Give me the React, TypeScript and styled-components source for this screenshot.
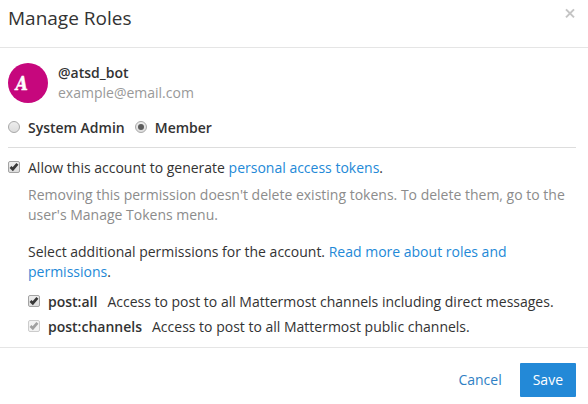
import React from "react";
import styled, { createGlobalStyle } from "styled-components";

const GlobalStyle = createGlobalStyle`
  * { box-sizing: border-box; }
  body { margin: 0; background: #fff; }
`;
const Dialog = styled.section`
  width: 588px; height: 404px; overflow: hidden; background: #fff;
  display: flex; flex-direction: column;
  font: 14px/20px "Open Sans", sans-serif; color: #333;
`;
const Header = styled.header`
  height: 48px; flex: none; padding: 6px 12px 0 8px; border-bottom: 1px solid #e5e5e5;
  display: flex; justify-content: space-between;
`;
const Title = styled.h1`
  margin: 0; font-size: 19px; line-height: 24px; font-weight: 400;
`;
const CloseButton = styled.button`
  border: 0; padding: 0; background: none; height: 16px; display: flex; color: #c4c4c4;
`;
const Body = styled.div`
  height: 299px; flex: none; padding: 15px 12px 0 8px;
`;
const Account = styled.div`
  display: flex; gap: 10px; height: 40px;
`;
const Avatar = styled.svg` width: 40px; height: 40px; flex: none; `;
const Name = styled.div` font-weight: 600; `;
const Email = styled.div` color: #999; `;
const Roles = styled.div`
  display: flex; height: 45px; padding-top: 15px; gap: 10px; border-bottom: 1px solid #ddd;
`;
const Choice = styled.label`
  display: flex; align-items: flex-start; gap: 8px; white-space: nowrap;
`;
const Mark = styled.svg` width: 12px; height: 12px; flex: none; margin-top: 3px; `;
const Strong = styled.span` font-weight: 600; `;
const Description = styled.span` margin-left: 2px; `;
const Allow = styled.div` padding-top: 10px; `;
const Content = styled.div` padding-left: 20px; `;
const Hint = styled.p` margin: 7px 0 0; color: #8c8c8c; `;
const Paragraph = styled.p` margin: 17px 0 0; `;
const Link = styled.a` color: #2389d7; `;
const Permissions = styled.div`
  display: flex; flex-direction: column; gap: 5px; margin-top: 10px;
`;
const Footer = styled.footer`
  height: 57px; border-top: 1px solid #e5e5e5; padding: 15px 12px 0 0;
  display: flex; justify-content: flex-end;
`;
const Button = styled.button<{ $primary?: boolean }>`
  height: 34px; padding: 0 13px; border: 0; border-radius: 1px; font: inherit;
  margin-left: 5px;
  color: ${p => p.$primary ? "#fff" : "#2f7fc4"};
  background: ${p => p.$primary ? "#2389d7" : "transparent"};
`;

const Gradients = () => (
  <defs>
    <linearGradient id="control" x1="0" y1="0" x2="0" y2="1">
      <stop offset="0" stopColor="#eee" /><stop offset="1" stopColor="#dcdcdc" />
    </linearGradient>
  </defs>
);
const Radio = ({ checked = false }: { checked?: boolean }) => (
  <Mark viewBox="0 0 12 12">
    <Gradients />
    <circle cx="6" cy="6" r="5.5" fill="url(#control)" stroke="#a9a9a9" />
    {checked && <circle cx="6" cy="6" r="3" fill="#5c5c5c" />}
  </Mark>
);
const Check = ({ disabled = false }: { disabled?: boolean }) => (
  <Mark viewBox="0 0 12 12">
    <Gradients />
    <rect x=".5" y=".5" width="11" height="11" rx="1.5" fill={disabled ? "#f2f2f2" : "url(#control)"} stroke={disabled ? "#ccc" : "#a3a3a3"} />
    <path d="M2.5 6 4.8 8.2 9.4 2.8" fill="none" stroke={disabled ? "#a0a0a0" : "#383838"} strokeWidth="2.7" />
  </Mark>
);

export default function App() {
  return (
    <>
      <GlobalStyle />
      <Dialog>
        <Header>
          <Title>Manage Roles</Title>
          <CloseButton aria-label="Close">
            <svg width="12" height="16" viewBox="0 0 12 16"><path d="M2 3.4l8 8M10 3.4l-8 8" stroke="currentColor" strokeWidth="2" /></svg>
          </CloseButton>
        </Header>
        <Body>
          <Account>
            <Avatar viewBox="0 0 40 40">
              <circle cx="20" cy="20" r="20" fill="#c6077d" />
              <text transform="translate(7.7 26.8) scale(.84 1)" fill="#fff" stroke="#fff" strokeWidth=".5" fontFamily="DejaVu Serif, serif" fontWeight="700" fontStyle="italic" fontSize="18.5">A</text>
            </Avatar>
            <div><Name>@atsd_bot</Name><Email>example@email.com</Email></div>
          </Account>
          <Roles>
            <Choice><Radio /><Strong>System Admin</Strong></Choice>
            <Choice><Radio checked /><Strong>Member</Strong></Choice>
          </Roles>
          <Allow>
            <Choice><Check /><span>Allow this account to generate <Link>personal access tokens</Link>.</span></Choice>
          </Allow>
          <Content>
            <Hint>Removing this permission doesn't delete existing tokens. To delete them, go to the<br />user's Manage Tokens menu.</Hint>
            <Paragraph>Select additional permissions for the account. <Link>Read more about roles and<br />permissions</Link>.</Paragraph>
            <Permissions>
              <Choice><Check /><Strong>post:all</Strong><Description>Access to post to all Mattermost channels including direct messages.</Description></Choice>
              <Choice><Check disabled /><Strong>post:channels</Strong><Description>Access to post to all Mattermost public channels.</Description></Choice>
            </Permissions>
          </Content>
        </Body>
        <Footer><Button>Cancel</Button><Button $primary>Save</Button></Footer>
      </Dialog>
    </>
  );
}
